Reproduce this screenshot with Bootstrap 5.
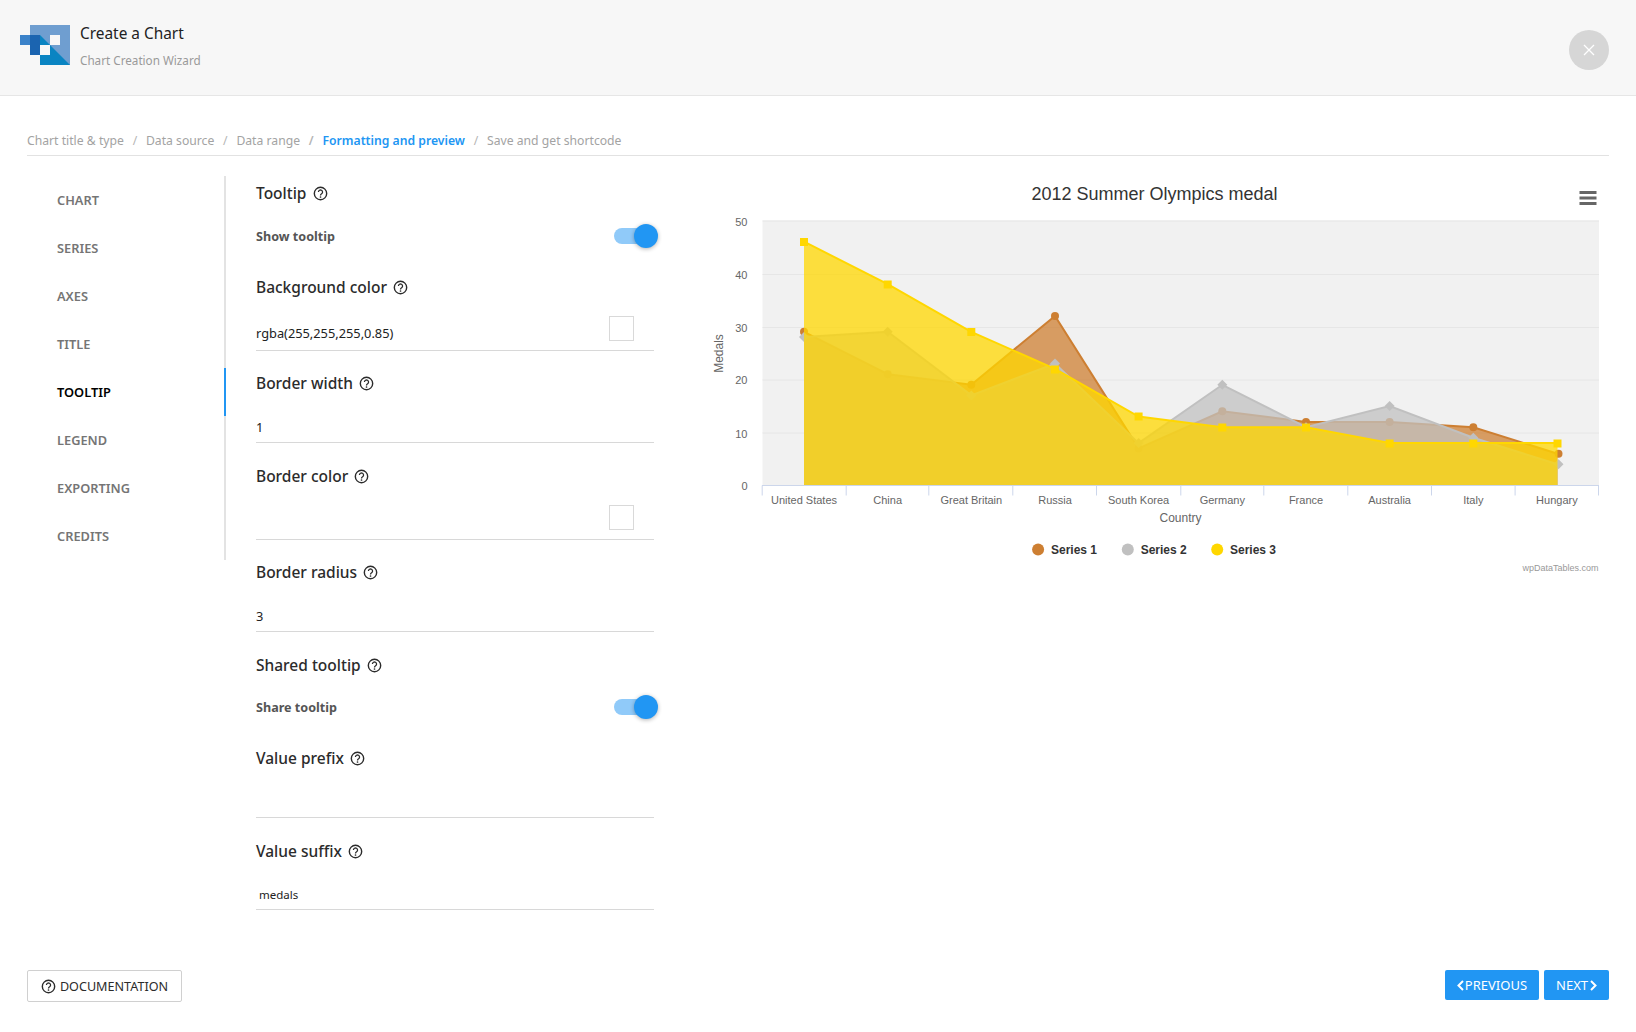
<!DOCTYPE html>
<html lang="en">
<head>
  <meta charset="UTF-8">
  <meta name="viewport" content="width=device-width, initial-scale=1.0">
  <title>Create a Chart</title>
  <link href="https://cdn.jsdelivr.net/npm/bootstrap@5.3.1/dist/css/bootstrap.min.css" rel="stylesheet">
  <style>
    body {
      font-family: "Noto Sans", "Open Sans", sans-serif;
      background: #fff;
      color: #333;
    }
    .wiz-header {
      height: 96px;
      background: #f7f7f7;
      border-bottom: 1px solid #e6e6e6;
      padding: 0 27px 0 20px;
    }
    .wiz-brand { margin-bottom: 6px; }
    .wiz-logo { margin-right: 10px; }
    .wiz-title { font-size: 15.4px; color: #222; line-height: 20px; margin-top: 4px; }
    .wiz-sub { font-size: 11.7px; color: #9a9a9a; line-height: 18px; margin-top: 7px; }
    .wiz-close {
      width: 40px;
      height: 40px;
      border-radius: 50%;
      background: #d6d6d6;
      margin-top: 4px;
    }
    .wiz-body { padding: 0 27px; }
    .wiz-crumbs {
      --bs-breadcrumb-item-padding-x: 8.75px;
      height: 60px;
      margin: 0;
      padding: 36px 0 0;
      border-bottom: 1px solid #e2e2e2;
      font-size: 12.2px;
      line-height: 18px;
    }
    .wiz-crumbs .breadcrumb-item { color: #a3a3a3; }
    .wiz-crumbs .breadcrumb-item::before { color: #b5b5b5; }
    .wiz-crumbs .breadcrumb-item.active { color: #2196f3; font-weight: 600; }
    .wiz-main { margin-top: 20px; }
    .wiz-side {
      width: 199px;
      height: 384px;
      border-right: 2px solid #e3e3e3;
      flex: none;
    }
    .wiz-side .nav-link {
      height: 48px;
      line-height: 48px;
      padding: 0 0 0 30px;
      margin-right: -2px;
      font-size: 12.8px;
      font-weight: 600;
      color: #757575;
      border-right: 2px solid transparent;
    }
    .wiz-side .nav-link.active { color: #000; border-right-color: #2196f3; }
    .wiz-form { width: 398px; margin-left: 30px; padding-top: 5px; flex: none; }
    .opt-head {
      height: 24px;
      line-height: 24px;
      font-size: 15.5px;
      font-weight: 500;
      color: #2b2b2b;
    }
    .opt-head svg { margin-left: 2px; vertical-align: -2px; }
    .opt-field {
      height: 47.5px;
      border-bottom: 1px solid #d8d8d8;
      margin-bottom: 21px;
      padding-bottom: 4px;
      font-size: 12.8px;
      color: #222;
    }
    .opt-field.tall { height: 52.5px; margin-bottom: 20px; padding-bottom: 7px; }
    .opt-field.toggle { height: 61px; border: 0; margin-bottom: 8.5px; padding: 0; }
    .opt-label { font-size: 12.6px; font-weight: 700; color: #555; margin-top: 3px; }
    .opt-small { font-size: 11.5px; margin: 0 0 2px 3px; }
    .swatch { width: 25px; height: 25px; border: 1px solid #d9d9d9; background: #fff; margin: 0 20px 2px 0; }
    .opt-switch { position: relative; width: 40px; height: 16px; border-radius: 8px; background: #90caf9; }
    .opt-switch::after {
      content: "";
      position: absolute;
      right: -4px;
      top: -4px;
      width: 24px;
      height: 24px;
      border-radius: 50%;
      background: #2196f3;
      box-shadow: 0 1px 4px rgba(0, 0, 0, .3);
    }
    .wiz-chart { margin-left: 46px; flex: none; display: block; }
    .wiz-chart text { font-family: "Liberation Sans", Arial, sans-serif; }
    .wiz-foot { margin-top: 60px; }
    .wiz-btn {
      height: 30px;
      padding: 0 12px;
      font-size: 13px;
      line-height: 30px;
      border: 0;
      border-radius: 2px;
      background: #2196f3;
      color: #fff;
    }
    .wiz-btn + .wiz-btn { margin-left: 5px; }
    .wiz-btn svg { vertical-align: -1px; }
    .wiz-btn .chev-l { margin-right: 1px; }
    .wiz-btn .chev-r { margin-left: 2px; }
    .wiz-doc {
      width: 155px;
      height: 32px;
      padding: 0;
      font-size: 12.6px;
      line-height: 31px;
      border: 1px solid #d0d0d0;
      border-radius: 2px;
      background: #fff;
      color: #2b2b2b;
    }
    .wiz-doc svg { margin-right: 4px; vertical-align: -3px; }
  </style>
</head>
<body>
  <svg width="0" height="0" class="d-block">
    <symbol id="ico-help" viewBox="0 0 16 16">
      <circle cx="8" cy="8" r="6.6" fill="none" stroke="currentColor" stroke-width="1.5"/>
      <path d="M5.8 6.4a2.2 2.2 0 1 1 3.4 1.9c-.8.5-1.2.9-1.2 1.8" fill="none" stroke="currentColor" stroke-width="1.4"/>
      <circle cx="8" cy="11.7" r=".9" fill="currentColor"/>
    </symbol>
  </svg>

  <header class="wiz-header d-flex align-items-center justify-content-between">
    <div class="wiz-brand d-flex align-items-center">
      <svg width="50" height="40" viewBox="20 25 50 40" class="wiz-logo">
        <path d="M30 25h40v40H40V55H30z" fill="#6f9ed0"/>
        <path d="M40 35l30 30H40z" fill="#0a84c2"/>
        <rect x="20" y="35" width="10" height="10" fill="#3b82c9"/>
        <rect x="30" y="35" width="10" height="20" fill="#1b64b0"/>
        <rect x="50" y="35" width="10" height="10" fill="#f7f7f7"/>
        <rect x="40" y="45" width="10" height="10" fill="#f7f7f7"/>
      </svg>
      <div>
        <div class="wiz-title">Create a Chart</div>
        <div class="wiz-sub">Chart Creation Wizard</div>
      </div>
    </div>
    <a class="wiz-close d-flex align-items-center justify-content-center" href="#" aria-label="Close">
      <svg width="12" height="12" viewBox="0 0 12 12"><path d="M1 1l10 10M11 1L1 11" stroke="#fff" stroke-width="1.3"/></svg>
    </a>
  </header>

  <div class="wiz-body">
    <ol class="breadcrumb wiz-crumbs">
      <li class="breadcrumb-item">Chart title &amp; type</li>
      <li class="breadcrumb-item">Data source</li>
      <li class="breadcrumb-item">Data range</li>
      <li class="breadcrumb-item active">Formatting and preview</li>
      <li class="breadcrumb-item">Save and get shortcode</li>
    </ol>

    <div class="wiz-main d-flex align-items-start">
      <nav class="wiz-side nav flex-column">
        <a class="nav-link" href="#">CHART</a>
        <a class="nav-link" href="#">SERIES</a>
        <a class="nav-link" href="#">AXES</a>
        <a class="nav-link" href="#">TITLE</a>
        <a class="nav-link active" href="#">TOOLTIP</a>
        <a class="nav-link" href="#">LEGEND</a>
        <a class="nav-link" href="#">EXPORTING</a>
        <a class="nav-link" href="#">CREDITS</a>
      </nav>

      <form class="wiz-form">
        <div class="opt-head">Tooltip <svg width="15" height="15"><use href="#ico-help"/></svg></div>
        <div class="opt-field toggle d-flex align-items-center justify-content-between">
          <span class="opt-label">Show tooltip</span><span class="opt-switch"></span>
        </div>

        <div class="opt-head">Background color <svg width="15" height="15"><use href="#ico-help"/></svg></div>
        <div class="opt-field tall d-flex align-items-end justify-content-between">
          <span>rgba(255,255,255,0.85)</span><span class="swatch"></span>
        </div>

        <div class="opt-head">Border width <svg width="15" height="15"><use href="#ico-help"/></svg></div>
        <div class="opt-field d-flex align-items-end"><span>1</span></div>

        <div class="opt-head">Border color <svg width="15" height="15"><use href="#ico-help"/></svg></div>
        <div class="opt-field tall d-flex align-items-end justify-content-end"><span class="swatch"></span></div>

        <div class="opt-head">Border radius <svg width="15" height="15"><use href="#ico-help"/></svg></div>
        <div class="opt-field d-flex align-items-end"><span>3</span></div>

        <div class="opt-head">Shared tooltip <svg width="15" height="15"><use href="#ico-help"/></svg></div>
        <div class="opt-field toggle d-flex align-items-center justify-content-between">
          <span class="opt-label">Share tooltip</span><span class="opt-switch"></span>
        </div>

        <div class="opt-head">Value prefix <svg width="15" height="15"><use href="#ico-help"/></svg></div>
        <div class="opt-field"></div>

        <div class="opt-head">Value suffix <svg width="15" height="15"><use href="#ico-help"/></svg></div>
        <div class="opt-field d-flex align-items-end mb-0"><span class="opt-small">medals</span></div>
      </form>

      <svg class="wiz-chart" width="909" height="400" viewBox="699.5 175.5 909 400">
        <text x="1154" y="199" text-anchor="middle" font-size="18" fill="#333">2012 Summer Olympics medal</text>
        <path d="M1579 192h17M1579 197.500h17M1579 203h17" stroke="#666" stroke-width="3"/>

        <rect x="762" y="220" width="836.500" height="265" fill="#f1f1f1"/>
        <path d="M762 220.500h836.500M762 274h836.500M762 327h836.500M762 379.500h836.500M762 432.500h836.500" stroke="#e6e6e6" fill="none"/>

        <g font-size="11" fill="#666" text-anchor="end">
          <text x="747" y="225">50</text>
          <text x="747" y="278">40</text>
          <text x="747" y="331">30</text>
          <text x="747" y="383">20</text>
          <text x="747" y="437">10</text>
          <text x="747" y="489">0</text>
        </g>
        <text transform="translate(722 353) rotate(-90)" text-anchor="middle" font-size="12" fill="#666">Medals</text>

        <!-- series 1 -->
        <path d="M803.500 331.300L887.200 373.700L970.800 384.300L1054.500 315.400L1138.100 447.900L1221.800 410.800L1305.500 421.400L1389.100 421.400L1472.800 426.700L1557 453.200V485H803.500Z" fill="#cd7f32" fill-opacity=".75"/>
        <path d="M803.500 331.300L887.200 373.700L970.800 384.300L1054.500 315.400L1138.100 447.900L1221.800 410.800L1305.500 421.400L1389.100 421.400L1472.800 426.700L1557 453.200" fill="none" stroke="#cd7f32" stroke-width="2"/>
        <g fill="#cd7f32">
          <circle cx="803.500" cy="331.300" r="4"/><circle cx="887.200" cy="373.700" r="4"/><circle cx="970.800" cy="384.300" r="4"/><circle cx="1054.500" cy="315.400" r="4"/><circle cx="1138.100" cy="447.900" r="4"/><circle cx="1221.800" cy="410.800" r="4"/><circle cx="1305.500" cy="421.400" r="4"/><circle cx="1389.100" cy="421.400" r="4"/><circle cx="1472.800" cy="426.700" r="4"/><circle cx="1558" cy="453.200" r="4"/>
        </g>

        <!-- series 2 -->
        <path d="M803.500 336.600L887.200 331.300L970.800 394.900L1054.500 363.100L1138.100 442.600L1221.800 384.300L1305.500 426.700L1389.100 405.500L1472.800 437.300L1557 463.800V485H803.500Z" fill="#c0c0c0" fill-opacity=".75"/>
        <path d="M803.500 336.600L887.200 331.300L970.800 394.900L1054.500 363.100L1138.100 442.600L1221.800 384.300L1305.500 426.700L1389.100 405.500L1472.800 437.300L1557 463.800" fill="none" stroke="#c0c0c0" stroke-width="2"/>
        <g fill="#c0c0c0">
          <path d="M803.500 331.600l5 5-5 5-5-5z"/><path d="M887.200 326.300l5 5-5 5-5-5z"/><path d="M970.800 389.900l5 5-5 5-5-5z"/><path d="M1054.500 358.100l5 5-5 5-5-5z"/><path d="M1138.100 437.600l5 5-5 5-5-5z"/><path d="M1221.800 379.300l5 5-5 5-5-5z"/><path d="M1305.500 421.700l5 5-5 5-5-5z"/><path d="M1389.100 400.500l5 5-5 5-5-5z"/><path d="M1472.800 432.300l5 5-5 5-5-5z"/><path d="M1558 458.800l5 5-5 5-5-5z"/>
        </g>

        <!-- series 3 -->
        <path d="M803.500 241.200L887.200 283.600L970.800 331.300L1054.500 368.400L1138.100 416.100L1221.800 426.700L1305.500 426.700L1389.100 442.600L1472.800 442.600L1557 442.600V485H803.500Z" fill="#ffd700" fill-opacity=".75"/>
        <path d="M803.500 241.200L887.200 283.600L970.800 331.300L1054.500 368.400L1138.100 416.100L1221.800 426.700L1305.500 426.700L1389.100 442.600L1472.800 442.600L1557 442.600" fill="none" stroke="#ffd700" stroke-width="2"/>
        <g fill="#ffd700">
          <rect x="799.500" y="237.500" width="8" height="8"/><rect x="883.200" y="280" width="8" height="8"/><rect x="966.800" y="327.500" width="8" height="8"/><rect x="1050.500" y="365" width="8" height="8"/><rect x="1134.100" y="412" width="8" height="8"/><rect x="1217.800" y="423" width="8" height="8"/><rect x="1301.500" y="423" width="8" height="8"/><rect x="1385.100" y="439" width="8" height="8"/><rect x="1468.800" y="439" width="8" height="8"/><rect x="1553" y="439" width="8" height="8"/>
        </g>

        <path d="M761.500 485h837M761.700 485v10M845.700 485v10M928.300 485v10M1012.300 485v10M1096 485v10M1180.300 485v10M1263.300 485v10M1347.300 485v10M1431 485v10M1514.600 485v10M1598 485v10" stroke="#ccd6eb" fill="none"/>
        <g font-size="11" fill="#666" text-anchor="middle">
          <text x="803.500" y="503">United States</text>
          <text x="887.200" y="503">China</text>
          <text x="970.800" y="503">Great Britain</text>
          <text x="1054.500" y="503">Russia</text>
          <text x="1138.100" y="503">South Korea</text>
          <text x="1221.800" y="503">Germany</text>
          <text x="1305.500" y="503">France</text>
          <text x="1389.100" y="503">Australia</text>
          <text x="1472.800" y="503">Italy</text>
          <text x="1556.400" y="503">Hungary</text>
        </g>
        <text x="1180" y="521" text-anchor="middle" font-size="12" fill="#666">Country</text>

        <circle cx="1037.600" cy="549" r="6" fill="#cd7f32"/>
        <circle cx="1127.300" cy="549" r="6" fill="#c0c0c0"/>
        <circle cx="1216.700" cy="549" r="6" fill="#ffd700"/>
        <g font-size="12" font-weight="700" fill="#333">
          <text x="1050.500" y="553">Series 1</text>
          <text x="1140.200" y="553">Series 2</text>
          <text x="1229.500" y="553">Series 3</text>
        </g>
        <text x="1598" y="570" text-anchor="end" font-size="9" fill="#999">wpDataTables.com</text>
      </svg>
    </div>

    <footer class="wiz-foot d-flex justify-content-between align-items-start">
      <button class="btn wiz-doc" type="button"><svg width="15" height="15"><use href="#ico-help"/></svg>DOCUMENTATION</button>
      <div class="d-flex">
        <button class="btn wiz-btn" type="button"><svg width="7" height="11" viewBox="0 0 7 11" class="chev-l"><path d="M6 1L1.500 5.500 6 10" fill="none" stroke="#fff" stroke-width="2"/></svg>PREVIOUS</button>
        <button class="btn wiz-btn" type="button">NEXT<svg width="7" height="11" viewBox="0 0 7 11" class="chev-r"><path d="M1 1l4.500 4.500L1 10" fill="none" stroke="#fff" stroke-width="2"/></svg></button>
      </div>
    </footer>
  </div>
</body>
</html>
